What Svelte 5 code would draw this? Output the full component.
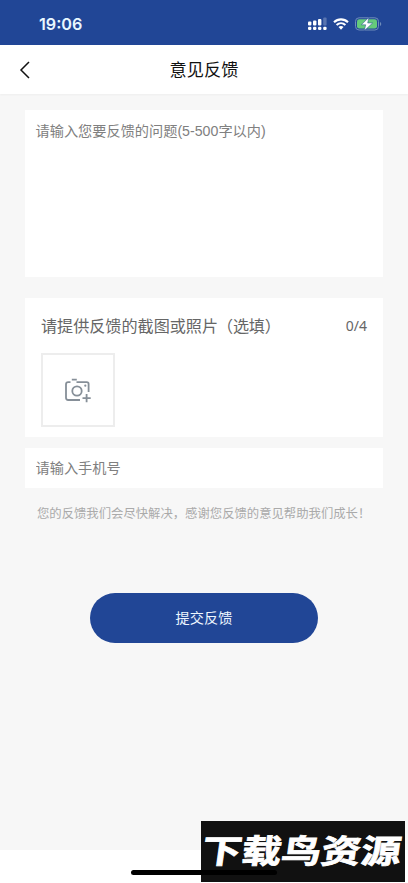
<script lang="ts">
	const maxPhotos = 4;
	let message = $state('');
	let phone = $state('');
	let photos = $state<string[]>([]);
</script>

<div class="screen">
	<div class="status">
		<span class="time">19:06</span>
		<div class="indicators">
			<svg class="signal" width="19" height="14" viewBox="0 0 19 14" fill="#fff">
				<rect x="0" y="4.5" width="3.4" height="4" rx="1" />
				<rect x="5" y="3.5" width="3.4" height="5" rx="1" />
				<rect x="10" y="2" width="3.4" height="6.5" rx="1" />
				<rect x="15.2" y="0.5" width="3.4" height="8" rx="1" opacity="0.25" />
				<rect x="0" y="9.7" width="3.4" height="3.3" rx="1.2" />
				<rect x="5" y="9.7" width="3.4" height="3.3" rx="1.2" />
				<rect x="10" y="9.7" width="3.4" height="3.3" rx="1.2" />
				<rect x="15.2" y="9.7" width="3.4" height="3.3" rx="1.2" />
			</svg>
			<svg class="wifi" width="16" height="12" viewBox="0 0 16 12">
				<path d="M1 4.2C4.9.4 11.1.4 15 4.2M3.6 7c2.5-2.3 6.3-2.3 8.8 0" fill="none" stroke="#fff" stroke-width="2.1" />
				<path d="M5.5 9c1.5-1.2 3.5-1.2 5 0L8 11.7z" fill="#fff" />
			</svg>
			<svg class="battery" width="27" height="14" viewBox="0 0 27 14">
				<rect x="0.5" y="0.8" width="23" height="12.2" rx="3.6" fill="none" stroke="#6f8cba" />
				<rect x="2" y="2.3" width="20" height="9.2" rx="2.3" fill="#65cb7b" />
				<path d="M25 5v4c1.7-.6 1.7-3.4 0-4z" fill="#6f8cba" />
				<path d="M13.8.4 6.4 7.8h4.3L9.4 13.6l8.2-7.6h-4.9z" fill="#fff" stroke="#22479a" stroke-width=".5" />
			</svg>
		</div>
	</div>

	<header>
		<button type="button" class="back" aria-label="返回">
			<svg width="12" height="18" viewBox="0 0 12 18">
				<path d="M10 1 2 9l8 8" fill="none" stroke="#111" stroke-width="1.5" />
			</svg>
		</button>
		<h1>意见反馈</h1>
	</header>

	<main>
		<textarea bind:value={message} placeholder="请输入您要反馈的问题(5-500字以内)" maxlength="500"></textarea>

		<section>
			<div class="caption">
				<span>请提供反馈的截图或照片<span class="optional">（选填）</span></span>
				<span class="count">{photos.length}/{maxPhotos}</span>
			</div>
			<button type="button" class="upload" aria-label="添加照片">
				<svg width="28" height="26" viewBox="0 0 28 26" fill="none" stroke="#868f98" stroke-width="1.8">
					<path d="M6.5 4.2H4.2Q2 4.2 2 6.4v13.4q0 2.2 2.2 2.2H16M12.5 4.2h10.3q1.8 0 1.8 1.8v8" />
					<path d="M7.8 1.6h5M22.6 16v8.2M18.5 20.1h8.2" />
					<circle cx="13" cy="13" r="4.7" />
					<circle cx="21.3" cy="7.7" r="1.1" fill="#868f98" stroke="none" />
				</svg>
			</button>
		</section>

		<input type="tel" bind:value={phone} placeholder="请输入手机号" />
		<p>您的反馈我们会尽快解决，感谢您反馈的意见帮助我们成长！</p>
		<button type="button" class="submit">提交反馈</button>
	</main>

	<footer></footer>
	<div class="watermark"><span>下载鸟资源</span></div>
	<div class="home-bar"></div>
</div>

<style>
	:global(body) {
		margin: 0;
	}
	.screen {
		position: relative;
		display: flex;
		flex-direction: column;
		height: 883px;
		overflow: hidden;
		background: #f7f7f7;
		font-family: 'Liberation Sans', 'Noto Sans CJK SC', sans-serif;
	}
	button,
	input,
	textarea {
		box-sizing: border-box;
		margin: 0;
		padding: 0;
		border: none;
		border-radius: 0;
		outline: none;
		font-family: inherit;
	}
	.status {
		box-sizing: border-box;
		flex: none;
		display: flex;
		align-items: center;
		justify-content: space-between;
		height: 45px;
		padding: 2px 26px 0 39px;
		background: #214696;
		color: #e9f7ff;
	}
	.time {
		font: 600 16.2px/20px Inter, sans-serif;
	}
	.indicators {
		display: flex;
		align-items: center;
	}
	.wifi {
		margin: 0 6px 0 6px;
	}
	header {
		flex: none;
		display: grid;
		grid-template-columns: 50px 1fr 50px;
		align-items: center;
		height: 49px;
		background: #fff;
		box-shadow: 0 1px 2px rgba(0, 0, 0, 0.04);
	}
	.back {
		display: flex;
		padding-left: 19px;
		background: none;
	}
	h1 {
		margin: 0;
		color: #111;
		font-size: 17.2px;
		font-weight: 400;
		line-height: 24px;
		text-align: center;
	}
	main {
		flex: 1;
		display: flex;
		flex-direction: column;
		padding: 16px 25px 0;
	}
	textarea {
		flex: none;
		height: 167px;
		padding: 11px 10.5px 0;
		resize: none;
		font-size: 14.2px;
		line-height: 21px;
	}
	textarea::placeholder,
	input::placeholder {
		color: #808080;
		opacity: 1;
	}
	section {
		box-sizing: border-box;
		flex: none;
		height: 139px;
		margin: 21px 0 11px;
		padding: 16px 16px 0 16px;
		background: #fff;
	}
	.caption {
		display: flex;
		justify-content: space-between;
		color: #666;
		font-size: 16.1px;
		line-height: 24px;
	}
	.optional {
		margin-left: -1px;
		letter-spacing: -0.2px;
	}
	.count {
		font-family: 'Noto Sans', sans-serif;
		font-size: 14px;
	}
	.upload {
		display: grid;
		place-items: center;
		width: 74px;
		height: 74px;
		margin-top: 15px;
		border: 2px solid #ededed;
		background: #fff;
	}
	.upload svg {
		margin-top: 1px;
	}
	input {
		height: 40px;
		padding: 0 10.5px;
		font-size: 14.2px;
	}
	p {
		margin: 17px 0 0 12px;
		color: #aaa;
		font-size: 12.35px;
		line-height: 18px;
		white-space: nowrap;
	}
	.submit {
		align-self: center;
		width: 228px;
		height: 50px;
		margin-top: 70px;
		padding-bottom: 2px;
		border-radius: 25px;
		background: #214696;
		color: #eef6ff;
		font-size: 14.2px;
	}
	footer {
		flex: none;
		height: 33px;
		background: #fff;
	}
	.watermark {
		position: absolute;
		right: 3px;
		bottom: 1px;
		box-sizing: border-box;
		display: flex;
		align-items: center;
		justify-content: center;
		width: 204px;
		height: 61px;
		padding-right: 3px;
		background: #111;
	}
	.watermark span {
		color: #fff;
		font-size: 39.8px;
		font-weight: 700;
		line-height: 61px;
		white-space: nowrap;
		-webkit-text-stroke: 1px #fff;
		transform: skewX(-8deg) scaleY(0.82);
	}
	.home-bar {
		position: absolute;
		left: 131px;
		bottom: 8px;
		width: 146px;
		height: 5px;
		border-radius: 3px;
		background: #000;
	}
</style>
